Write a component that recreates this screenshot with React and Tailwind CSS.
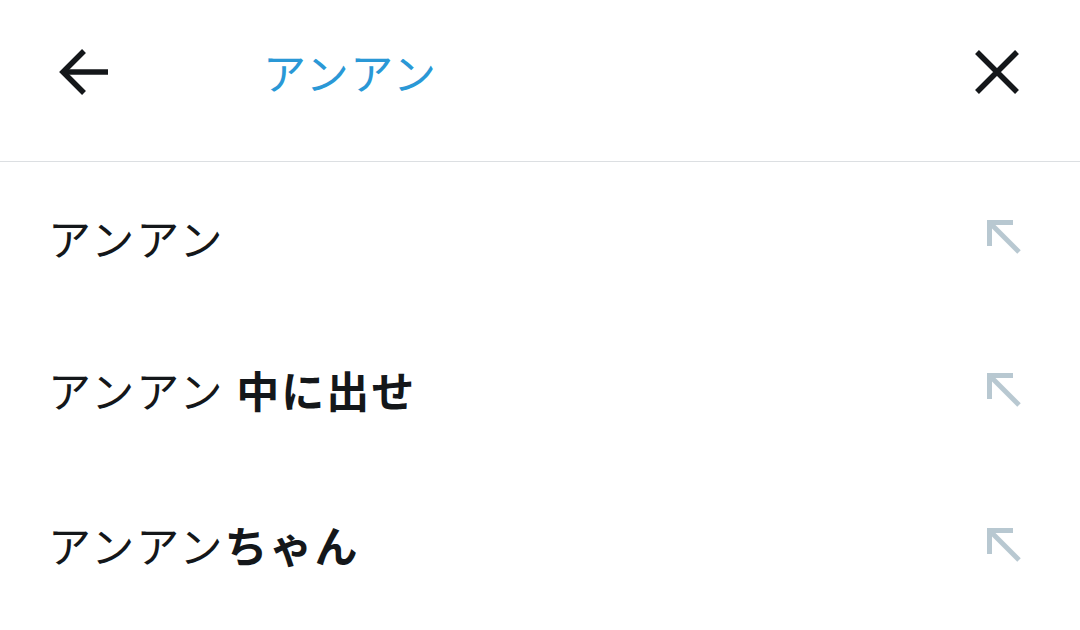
const suggestions = [
  { query: "アンアン", rest: "" },
  { query: "アンアン", rest: " 中に出せ" },
  { query: "アンアン", rest: "ちゃん" },
];

const font = { fontFamily: '"Noto Sans CJK JP", "Noto Sans", sans-serif' };

const ArrowUpLeft = () => (
  <svg width="36" height="36" viewBox="0 0 36 36" fill="none" stroke="#b8c8d1" strokeWidth="5">
    <path d="M3.5 27V3.5H27" />
    <path d="M3.5 3.5l29.5 29.5" />
  </svg>
);

export default function App() {
  return (
    <div className="w-[1080px] h-[630px] bg-white overflow-hidden" style={font}>
      <header className="h-[162px] flex items-center border-b border-[#dcdfe2]">
        <button className="w-[60px] ml-[58px] mt-[-18px] flex items-center">
          <svg width="52" height="50" viewBox="0 0 52 50" fill="none" stroke="#14171a" strokeWidth="5.5">
            <path d="M26 4L5 25l21 21" />
            <path d="M5 25h45" />
          </svg>
        </button>
        <div className="ml-[145px] mt-[-18px] text-[43px] tracking-[1.5px] text-[#2a98d6]">アンアン</div>
        <button className="ml-auto mr-[60px] mt-[-18px]">
          <svg width="46" height="46" viewBox="0 0 46 46" fill="none" stroke="#14171a" strokeWidth="5.5">
            <path d="M3 3l40 40M43 3L3 43" />
          </svg>
        </button>
      </header>
      <ul>
        {suggestions.map((s, i) => (
          <li key={i} className="h-[155px] flex items-center pl-[48px] pr-[58px] first:h-[150px]">
            <span className="text-[43px] text-[#14171a] tracking-[2px]">
              {s.query}
              {s.rest && <span className="font-semibold">{s.rest}</span>}
            </span>
            <span className="ml-auto">
              <ArrowUpLeft />
            </span>
          </li>
        ))}
      </ul>
    </div>
  );
}
